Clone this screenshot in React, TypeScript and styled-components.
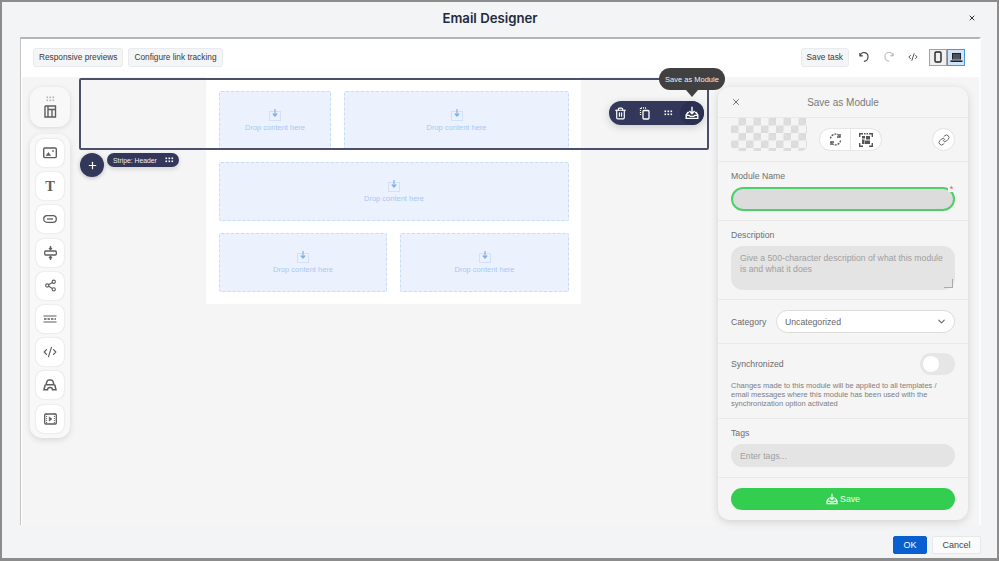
import React from 'react';
import styled, { createGlobalStyle } from 'styled-components';
import { ChevronDown, CodeXml, Link, Plus, Share2, Trash2, X } from 'lucide-react';

const GlobalStyle = createGlobalStyle`
  html, body {
    margin: 0;
    padding: 0;
    font-family: "Liberation Sans", Arial, sans-serif;
  }
  * { box-sizing: border-box; }
`;

const Modal = styled.div`
  width: 999px;
  height: 561px;
  display: flex;
  flex-direction: column;
  background: #f3f4f6;
  border: 2px solid #8c8c8c;
  border-bottom-width: 3px;
  overflow: hidden;
`;

const Header = styled.header`
  height: 35px;
  flex: none;
  display: flex;
  align-items: center;
  justify-content: center;
  position: relative;
`;

const Title = styled.h1`
  margin: 0 19px 3px 0;
  font: 600 13.2px "Inter", sans-serif;
  color: #1f2a40;
`;

const CloseX = styled.span`
  position: absolute;
  right: 21px;
  top: 12px;
  display: flex;
  color: #333;
`;

const Frame = styled.div`
  flex: 1;
  margin: 0 16px 0 18px;
  display: flex;
  flex-direction: column;
  border-top: 2px solid #b5b5b5;
  border-left: 1px solid #c4c4c4;
  border-right: 2px solid #fcfcfc;
  min-height: 0;
`;

const Toolbar = styled.div`
  height: 38px;
  flex: none;
  background: #fff;
  display: flex;
  align-items: center;
  gap: 5px;
  padding: 0 14px 2px 12px;
`;

const ToolButton = styled.button`
  height: 19px;
  padding: 0 5px;
  border: 1px solid #e8eaee;
  border-radius: 3px;
  background: #f4f5f7;
  color: #3a3a3a;
  font: 8.3px "Liberation Sans", sans-serif;
  white-space: nowrap;
`;

const Spring = styled.div`
  flex: 1;
`;

const HistoryRow = styled.div`
  display: flex;
  align-items: center;
  gap: 14.5px;
  margin: 0 6px 0 5px;
`;

const HistoryIcon = styled.span<{ $dim?: boolean }>`
  display: flex;
  color: ${p => (p.$dim ? '#a8a8a8' : '#444')};
`;

const DeviceToggle = styled.div`
  display: flex;
  height: 17px;
`;

const DeviceButton = styled.span<{ $active?: boolean }>`
  width: 18px;
  display: flex;
  align-items: center;
  justify-content: center;
  color: #222;
  background: ${p => (p.$active ? '#cfe3f9' : '#f0f0f0')};
  border: 1px solid ${p => (p.$active ? '#4a94e0' : '#a0a0a0')};
`;

const Canvas = styled.div`
  flex: 1;
  position: relative;
  display: flex;
  align-items: flex-start;
  background: #f5f5f6;
  box-shadow: inset 1px 0 0 #fff;
  min-height: 0;
`;

const Palette = styled.aside`
  width: 185px;
  flex: none;
  display: flex;
  flex-direction: column;
  gap: 7px;
  padding: 10px 0 0 9px;
`;

const PaletteCard = styled.div`
  width: 40px;
  height: 40px;
  display: flex;
  flex-direction: column;
  align-items: center;
  justify-content: center;
  gap: 3px;
  border-radius: 12px;
  background: #f8f8f8;
  box-shadow: 0 1px 5px rgba(0, 0, 0, 0.12);
  color: #5e5e5e;
`;

const PaletteGroup = styled.div`
  width: 40px;
  display: flex;
  flex-direction: column;
  align-items: center;
  gap: 5.2px;
  padding: 5px 0;
  border-radius: 12px;
  background: #f8f8f8;
  box-shadow: 0 2px 6px rgba(0, 0, 0, 0.12);
`;

const PaletteTool = styled.div`
  width: 28px;
  height: 28px;
  display: flex;
  align-items: center;
  justify-content: center;
  border-radius: 8px;
  background: #fff;
  box-shadow: 0 0 2px rgba(0, 0, 0, 0.16);
  color: #5e5e5e;
  font: bold 14.5px "Liberation Serif", serif;
`;

const EmailColumn = styled.main`
  width: 375px;
  flex: none;
  display: flex;
  flex-direction: column;
  gap: 12px;
  padding: 14px 12px 12px 13px;
  background: #fff;
`;

const DropRow = styled.div<{ $cols: string }>`
  display: grid;
  grid-template-columns: ${p => p.$cols};
  gap: 13px;
`;

const DropZone = styled.div`
  height: 59px;
  display: flex;
  flex-direction: column;
  align-items: center;
  justify-content: center;
  gap: 2px;
  background: #ebf2fd;
  border: 1px dashed #c8dcf8;
  border-radius: 2px;
  color: #a8c8f2;
  font-size: 7.5px;
`;

const StripeOutline = styled.div`
  position: absolute;
  left: 58px;
  top: 1px;
  width: 630px;
  height: 72px;
  border: 2px solid #4b4f6b;
  border-radius: 2px;
`;

const AddButton = styled.div`
  position: absolute;
  left: 59px;
  top: 76px;
  width: 24px;
  height: 24px;
  display: flex;
  align-items: center;
  justify-content: center;
  border-radius: 50%;
  background: #33385a;
  color: #fff;
  box-shadow: 0 1px 4px rgba(0, 0, 0, 0.25);
`;

const StripeTag = styled.div`
  position: absolute;
  left: 86px;
  top: 76px;
  width: 72px;
  height: 14px;
  display: flex;
  align-items: center;
  justify-content: space-between;
  padding: 0 5px 0 6px;
  border-radius: 7px;
  background: #33385a;
  color: #f0f0f5;
  font-size: 6.8px;
  box-shadow: 0 2px 5px rgba(0, 0, 0, 0.15);
`;

const StripeActions = styled.div`
  position: absolute;
  left: 588px;
  top: 24px;
  width: 95px;
  height: 24px;
  display: flex;
  align-items: center;
  border-radius: 12px;
  background: #33385a;
  color: #fff;
  box-shadow: 0 2px 8px rgba(0, 0, 0, 0.18);
`;

const ActionIcon = styled.span<{ $active?: boolean }>`
  width: 24px;
  height: 24px;
  display: flex;
  align-items: center;
  justify-content: center;
  border-radius: 12px;
  background: ${p => (p.$active ? '#2b3050' : 'transparent')};
`;

const Tooltip = styled.div`
  position: absolute;
  left: 638px;
  top: -9px;
  width: 66px;
  height: 22px;
  display: flex;
  align-items: center;
  justify-content: center;
  border-radius: 11px;
  background: #404040;
  color: #eee;
  font-size: 7.5px;
  white-space: nowrap;

  &::after {
    content: '';
    position: absolute;
    left: 27px;
    bottom: -7px;
    border-left: 6px solid transparent;
    border-right: 6px solid transparent;
    border-top: 7px solid #404040;
  }
`;

const Panel = styled.aside`
  position: absolute;
  left: 697px;
  top: 10px;
  width: 250px;
  height: 433px;
  display: flex;
  flex-direction: column;
  background: #f5f5f5;
  border-radius: 12px;
  box-shadow: 0 2px 8px rgba(0, 0, 0, 0.15);
  color: #6b6b6b;
  font-size: 8.7px;
`;

const PanelHeader = styled.div`
  height: 31px;
  flex: none;
  display: flex;
  align-items: center;
  justify-content: center;
  position: relative;
  border-bottom: 1px solid #e9e9e9;
  font-size: 10px;
  color: #7a7a7a;
`;

const PanelClose = styled.span`
  position: absolute;
  left: 13px;
  top: 10px;
  display: flex;
  color: #555;
`;

const Section = styled.section<{ $h: number }>`
  height: ${p => p.$h}px;
  flex: none;
  padding: 0 13px;
  border-bottom: 1px solid #e9e9e9;
  display: flex;
  flex-direction: column;

  &:last-child { border-bottom: none; }
`;

const ThumbRow = styled.div`
  display: flex;
  align-items: flex-start;
`;

const Thumb = styled.div`
  width: 76px;
  height: 33px;
  border-radius: 0 0 6px 6px;
  background-color: #f4f4f4;
  background-image:
    linear-gradient(45deg, #dcdcdc 25%, transparent 25%, transparent 75%, #dcdcdc 75%),
    linear-gradient(45deg, #dcdcdc 25%, transparent 25%, transparent 75%, #dcdcdc 75%);
  background-size: 15px 15px;
  background-position: 0 0, 7.5px 7.5px;
`;

const ThumbActions = styled.div`
  display: flex;
  gap: 1px;
  margin: 10px 0 0 12px;
  height: 23px;
  padding: 1px;
  border-radius: 12px;
  background: #e6e6e6;
`;

const ThumbAction = styled.span<{ $side: 'l' | 'r' }>`
  width: 30px;
  display: flex;
  align-items: center;
  justify-content: center;
  background: #fff;
  color: #555;
  border-radius: ${p => (p.$side === 'l' ? '11px 0 0 11px' : '0 11px 11px 0')};
`;

const LinkButton = styled.span`
  width: 23px;
  height: 23px;
  margin: 10px 0 0 auto;
  display: flex;
  align-items: center;
  justify-content: center;
  border-radius: 50%;
  background: #fff;
  border: 1px solid #e2e2e2;
  color: #666;
`;

const Label = styled.label`
  display: block;
  margin-top: 9px;
  margin-bottom: 6px;
  line-height: 10px;
  color: #6f6f6f;
`;

const NameInput = styled.div`
  height: 24px;
  position: relative;
  border-radius: 12px;
  background: #dcdcdc;
  border: 2px solid #4fcf6b;

  &::after {
    content: '*';
    position: absolute;
    right: -2px;
    top: -5px;
    width: 7px;
    height: 8px;
    background: #f5f5f5;
    color: #f0525a;
    font-size: 9px;
    line-height: 10px;
    text-align: center;
  }
`;

const TextArea = styled.div`
  height: 44px;
  position: relative;
  padding: 7px 8px 7px 9px;
  border-radius: 12px;
  background: #e4e4e4;
  color: #a0a0a0;
  line-height: 11px;

  &::after {
    content: '';
    position: absolute;
    right: 2px;
    bottom: 2px;
    width: 8px;
    height: 8px;
    border-right: 1px solid #aaa;
    border-bottom: 1px solid #aaa;
  }
`;

const InlineRow = styled.div`
  display: flex;
  align-items: center;
  justify-content: space-between;
  flex: 1;
`;

const SelectBox = styled.div`
  width: 179px;
  height: 23px;
  display: flex;
  align-items: center;
  justify-content: space-between;
  padding: 0 7px 0 8px;
  border-radius: 12px;
  background: #fff;
  border: 1px solid #dcdcdc;
  color: #666;
`;

const SyncRow = styled.div`
  display: flex;
  align-items: center;
  justify-content: space-between;
  margin-top: 9px;
`;

const Toggle = styled.div`
  width: 35px;
  height: 22px;
  padding: 3px;
  border-radius: 11px;
  background: #e6e6e6;
`;

const Knob = styled.div`
  width: 16px;
  height: 16px;
  border-radius: 50%;
  background: #fff;
`;

const HelpText = styled.p`
  margin: 6px 0 0;
  font-size: 7.5px;
  line-height: 9px;
  color: #808080;
`;

const TagInput = styled.div`
  height: 23px;
  display: flex;
  align-items: center;
  padding: 0 9px;
  border-radius: 12px;
  background: #e4e4e4;
  color: #a0a0a0;
`;

const SaveButton = styled.button`
  height: 22px;
  margin-top: 10px;
  display: flex;
  align-items: center;
  justify-content: center;
  gap: 2px;
  border: none;
  border-radius: 11px;
  background: #33ce50;
  color: #f2fff4;
  font: 8.7px "Liberation Sans", sans-serif;
`;

const Footer = styled.footer`
  height: 33px;
  flex: none;
  display: flex;
  align-items: center;
  justify-content: flex-end;
  gap: 5px;
  padding: 7px 16px 0 0;
  background: #f3f4f6;
`;

const FooterButton = styled.button<{ $primary?: boolean }>`
  width: ${p => (p.$primary ? 34 : 49)}px;
  height: 18px;
  border: 1px solid ${p => (p.$primary ? '#0a5fd0' : '#e6e8ec')};
  border-radius: 2px;
  background: ${p => (p.$primary ? '#0a5fd0' : '#fbfbfc')};
  color: ${p => (p.$primary ? '#fff' : '#444')};
  font: 9px "Liberation Sans", sans-serif;
`;

const DragDots = ({ size = 9, color = 'currentColor' }: { size?: number; color?: string }) => (
  <svg width={size} height={size * 0.67} viewBox="0 0 9 6" fill={color}>
    {[0.5, 3.5, 6.5].map(x => [0.5, 3.5].map(y => <rect key={`${x}-${y}`} x={x} y={y} width="1.6" height="1.6" />))}
  </svg>
);

const DropIcon = () => (
  <svg width="12" height="12" viewBox="0 0 12 12" fill="none" stroke="currentColor">
    <rect x="0.5" y="2.5" width="11" height="9" strokeWidth="0.8" strokeDasharray="1 1" />
    <path d="M6 0v6.5M3.8 4.5 6 7l2.2-2.5" strokeWidth="1.2" stroke="#7fb0ee" />
  </svg>
);

const TrayIcon = ({ size = 14 }: { size?: number }) => (
  <svg width={size} height={size} viewBox="0 0 14 14" fill="none" stroke="currentColor" strokeWidth="1.4">
    <path d="M7 .8v6.7M4.4 5 7 7.7 9.6 5" />
    <path d="M4 6.5H2.8L1.2 9v3.4h11.6V9l-1.6-2.5H10" />
    <path d="M1.2 9.4h3.2l.8 1h3.6l.8-1h3.2" />
  </svg>
);

const UndoIcon = ({ flip }: { flip?: boolean }) => (
  <svg width="10" height="10" viewBox="0 0 11 11" fill="none" stroke="currentColor" strokeWidth={flip ? 1 : 1.3} style={flip ? { transform: 'scaleX(-1)' } : undefined}>
    <path d="M1 1.2v3h3.2" />
    <path d="M1.4 4A4 4 0 0 1 9.8 5.6 4 4 0 0 1 5.4 10" />
  </svg>
);

const PhoneIcon = () => (
  <svg width="8" height="12" viewBox="0 0 8 12" fill="none" stroke="currentColor" strokeWidth="1.4">
    <rect x="1" y="1" width="6" height="10" rx="1.2" />
  </svg>
);

const LaptopIcon = () => (
  <svg width="13" height="11" viewBox="0 0 13 11" fill="currentColor">
    <path d="M2 1h9v6.5H2zM3 2v4.5h7V2z" fillRule="evenodd" />
    <rect x="3" y="2" width="7" height="4.5" opacity="0.75" />
    <rect x="0.5" y="8.4" width="12" height="1.6" />
  </svg>
);

const LayoutIcon = () => (
  <svg width="13" height="13" viewBox="0 0 13 13" fill="none" stroke="currentColor" strokeWidth="1.4">
    <path d="M1 1h10.5v8.5M1 1v11h7M4 1v11M4 4.5h7.5M8 4.5V12h3.5V9.5" />
  </svg>
);

const ImageIcon = () => (
  <svg width="14" height="12" viewBox="0 0 14 12" fill="none" stroke="currentColor" strokeWidth="1.4">
    <rect x="0.7" y="1" width="12.6" height="9.6" rx="1" />
    <path d="M3 8.5 5.5 5.5 7.5 8.5z" fill="currentColor" strokeWidth="0.6" />
    <circle cx="10" cy="4" r="0.7" fill="currentColor" strokeWidth="0.4" />
  </svg>
);

const ButtonIcon = () => (
  <svg width="14" height="8" viewBox="0 0 14 8" fill="none" stroke="currentColor" strokeWidth="1.3">
    <rect x="0.7" y="0.7" width="12.6" height="6.6" rx="3.3" />
    <path d="M4 4h6" />
  </svg>
);

const SpacerIcon = () => (
  <svg width="13" height="14" viewBox="0 0 13 14" fill="none" stroke="currentColor" strokeWidth="1.3">
    <rect x="0.7" y="5" width="11.6" height="4" rx="1" />
    <path d="M6.5 0v3.5M5 2l1.5 1.5L8 2M6.5 14v-3.5M5 12l1.5-1.5L8 12" />
  </svg>
);

const DividerIcon = () => (
  <svg width="14" height="8" viewBox="0 0 14 8" fill="none" stroke="currentColor">
    <path d="M0.5 1h13M0.5 7h13" strokeWidth="1.1" />
    <path d="M1 4h12" strokeWidth="1.3" strokeDasharray="2.5 1" />
  </svg>
);

const CarIcon = () => (
  <svg width="14" height="12" viewBox="0 0 14 12" fill="none" stroke="currentColor" strokeWidth="1.5">
    <path d="M3.2 5 4 2.4C4.3 1.5 5 1 6 1h2c1 0 1.7.5 2 1.4l.8 2.6" />
    <path d="M2.4 5.8h9.2M2.2 5.8 1 10.7h3.5c0-1.4.6-2.2 2.5-2.2s2.5.8 2.5 2.2H13l-1.2-4.9" />
  </svg>
);

const VideoIcon = () => (
  <svg width="13" height="12" viewBox="0 0 13 12" fill="none" stroke="currentColor" strokeWidth="1.3">
    <rect x="0.7" y="1" width="11.6" height="10" rx="1" />
    <path d="M2.6 1v10M10.4 1v10" strokeDasharray="1 1" strokeWidth="1" />
    <path d="M5.2 3.8 8 6 5.2 8.2z" fill="currentColor" strokeWidth="0.5" />
  </svg>
);

const DuplicateIcon = () => (
  <svg width="13" height="13" viewBox="0 0 13 13" fill="none" stroke="currentColor" strokeWidth="1.3">
    <rect x="5" y="3.5" width="6" height="8.5" rx="1" />
    <path d="M2.5 1v8" strokeDasharray="1 1" />
    <path d="M3 1h5" strokeDasharray="1 1" />
  </svg>
);

const RefreshDashIcon = () => (
  <svg width="13" height="13" viewBox="0 0 13 13" fill="none" stroke="currentColor" strokeWidth="1.4" strokeDasharray="2 1">
    <path d="M1.5 5.5A5 5 0 0 1 11 4M11.5 7.5A5 5 0 0 1 2 9" />
    <path d="M11 1v3H8M2 12V9h3" strokeDasharray="none" />
  </svg>
);

const QrIcon = () => (
  <svg width="14" height="14" viewBox="0 0 14 14" fill="currentColor">
    <path d="M0 0h4v1.4H1.4V4H0zM10 0h4v4h-1.4V1.4H10zM0 10h1.4v2.6H4V14H0zM14 10v4h-4v-1.4h2.6V10z" />
    <path d="M5 0h1.5v1.4H5zM7.5 0H9v1.4H7.5zM3 3h3v2.5H3zM7 3h4v3.5H7zM3 6.5h2.5V11H3zM6 7.5h5V11H6z" />
  </svg>
);

const drop = (
  <>
    <DropIcon />
    <span>Drop content here</span>
  </>
);

export default function App() {
  return (
    <Modal>
      <GlobalStyle />
      <Header>
        <Title>Email Designer</Title>
        <CloseX><X size={8} strokeWidth={3} /></CloseX>
      </Header>
      <Frame>
        <Toolbar>
          <ToolButton>Responsive previews</ToolButton>
          <ToolButton>Configure link tracking</ToolButton>
          <Spring />
          <ToolButton>Save task</ToolButton>
          <HistoryRow>
            <HistoryIcon><UndoIcon /></HistoryIcon>
            <HistoryIcon $dim><UndoIcon flip /></HistoryIcon>
            <HistoryIcon><CodeXml size={10} strokeWidth={2.2} /></HistoryIcon>
          </HistoryRow>
          <DeviceToggle>
            <DeviceButton><PhoneIcon /></DeviceButton>
            <DeviceButton $active><LaptopIcon /></DeviceButton>
          </DeviceToggle>
        </Toolbar>
        <Canvas>
          <Palette>
            <PaletteCard>
              <DragDots color="#b5b5b5" />
              <LayoutIcon />
            </PaletteCard>
            <PaletteGroup>
              <PaletteTool><ImageIcon /></PaletteTool>
              <PaletteTool>T</PaletteTool>
              <PaletteTool><ButtonIcon /></PaletteTool>
              <PaletteTool><SpacerIcon /></PaletteTool>
              <PaletteTool><Share2 size={13} /></PaletteTool>
              <PaletteTool><DividerIcon /></PaletteTool>
              <PaletteTool><CodeXml size={14} /></PaletteTool>
              <PaletteTool><CarIcon /></PaletteTool>
              <PaletteTool><VideoIcon /></PaletteTool>
            </PaletteGroup>
          </Palette>
          <EmailColumn>
            <DropRow $cols="112px 225px">
              <DropZone>{drop}</DropZone>
              <DropZone>{drop}</DropZone>
            </DropRow>
            <DropRow $cols="1fr">
              <DropZone>{drop}</DropZone>
            </DropRow>
            <DropRow $cols="168px 169px">
              <DropZone>{drop}</DropZone>
              <DropZone>{drop}</DropZone>
            </DropRow>
          </EmailColumn>

          <StripeOutline />
          <AddButton><Plus size={11} strokeWidth={2.6} /></AddButton>
          <StripeTag>
            <span>Stripe: Header</span>
            <DragDots color="#fff" />
          </StripeTag>
          <StripeActions>
            <ActionIcon><Trash2 size={13} strokeWidth={2.2} /></ActionIcon>
            <ActionIcon><DuplicateIcon /></ActionIcon>
            <ActionIcon><DragDots color="#fff" /></ActionIcon>
            <ActionIcon $active><TrayIcon /></ActionIcon>
          </StripeActions>
          <Tooltip>Save as Module</Tooltip>

          <Panel>
            <PanelHeader>
              <PanelClose><X size={10} /></PanelClose>
              Save as Module
            </PanelHeader>
            <Section $h={44}>
              <ThumbRow>
                <Thumb />
                <ThumbActions>
                  <ThumbAction $side="l"><RefreshDashIcon /></ThumbAction>
                  <ThumbAction $side="r"><QrIcon /></ThumbAction>
                </ThumbActions>
                <LinkButton><Link size={12} /></LinkButton>
              </ThumbRow>
            </Section>
            <Section $h={59}>
              <Label>Module Name</Label>
              <NameInput />
            </Section>
            <Section $h={79}>
              <Label>Description</Label>
              <TextArea>Give a 500-character description of what this module is and what it does</TextArea>
            </Section>
            <Section $h={44}>
              <InlineRow>
                <span>Category</span>
                <SelectBox>
                  Uncategorized
                  <ChevronDown size={11} strokeWidth={2.4} />
                </SelectBox>
              </InlineRow>
            </Section>
            <Section $h={75}>
              <SyncRow>
                <span>Synchronized</span>
                <Toggle><Knob /></Toggle>
              </SyncRow>
              <HelpText>Changes made to this module will be applied to all templates / email messages where this module has been used with the synchronization option activated</HelpText>
            </Section>
            <Section $h={59}>
              <Label>Tags</Label>
              <TagInput>Enter tags...</TagInput>
            </Section>
            <Section $h={42}>
              <SaveButton><TrayIcon size={12} /> Save</SaveButton>
            </Section>
          </Panel>
        </Canvas>
      </Frame>
      <Footer>
        <FooterButton $primary>OK</FooterButton>
        <FooterButton>Cancel</FooterButton>
      </Footer>
    </Modal>
  );
}
